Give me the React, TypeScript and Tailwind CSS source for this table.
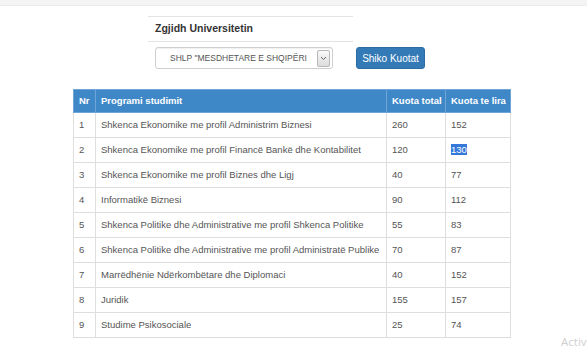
import React from 'react';

// ============ 数据 ============

interface ProgramRow {
    nr: number;
    name: string;
    total: number;
    free: number;
}

const ROWS: ProgramRow[] = [
    { nr: 1, name: 'Shkenca Ekonomike me profil Administrim Biznesi', total: 260, free: 152 },
    { nr: 2, name: 'Shkenca Ekonomike me profil Financë Bankë dhe Kontabilitet', total: 120, free: 130 },
    { nr: 3, name: 'Shkenca Ekonomike me profil Biznes dhe Ligj', total: 40, free: 77 },
    { nr: 4, name: 'Informatikë Biznesi', total: 90, free: 112 },
    { nr: 5, name: 'Shkenca Politike dhe Administrative me profil Shkenca Politike', total: 55, free: 83 },
    { nr: 6, name: 'Shkenca Politike dhe Administrative me profil Administratë Publike', total: 70, free: 87 },
    { nr: 7, name: 'Marrëdhënie Ndërkombëtare dhe Diplomaci', total: 40, free: 152 },
    { nr: 8, name: 'Juridik', total: 155, free: 157 },
    { nr: 9, name: 'Studime Psikosociale', total: 25, free: 74 },
];

const cell = 'border border-[#dedede] px-[5px] h-[25px] align-middle whitespace-nowrap';
const head = 'border border-[#6fa5d6] px-[5px] h-[23px] align-middle text-left font-bold text-white whitespace-nowrap';

export default function App() {
    return (
        <div className="relative w-[587px] h-[350px] overflow-hidden bg-white font-['Liberation_Sans',Arial,sans-serif] text-[#555]">
            {/* 顶部条 */}
            <div className="h-[6px] bg-[#f4f4f4] border-b border-[#ebebeb]" />

            {/* 标题 */}
            <div className="ml-[148px] mt-[10px] w-[205px] border-t border-[#e3e3e3] border-b">
                <div className="pl-[7px] h-[24px] flex items-center text-[10.5px] font-bold text-[#333]">
                    Zgjidh Universitetin
                </div>
            </div>

            {/* 选择 + 按钮 */}
            <div className="ml-[155px] mt-[5px] flex items-center gap-[23px]">
                <div className="w-[178px] h-[22px] border border-[#cfcfcf] rounded-[3px] bg-white flex items-center shadow-[inset_0_1px_1px_rgba(0,0,0,0.06)]">
                    <span className="flex-1 text-center text-[8.5px] text-[#555] whitespace-nowrap pl-[4px]">
                        SHLP "MESDHETARE E SHQIPËRI
                    </span>
                    <span className="mr-[2px] w-[13px] h-[17px] border border-[#b8b8b8] rounded-[2px] bg-gradient-to-b from-[#fafafa] to-[#dcdcdc] flex items-center justify-center">
                        <svg width="7" height="5" viewBox="0 0 7 5">
                            <path d="M1 1l2.5 2.5L6 1" stroke="#666" strokeWidth="1" fill="none" />
                        </svg>
                    </span>
                </div>
                <button className="w-[69px] h-[22px] rounded-[3px] bg-[#337ab7] border border-[#2e6da4] text-white text-[10px]">
                    Shiko Kuotat
                </button>
            </div>

            {/* 表格 */}
            <table className="ml-[73px] mt-[20px] w-[437px] table-fixed border-collapse text-[9.5px]">
                <colgroup>
                    <col className="w-[22px]" />
                    <col className="w-[291px]" />
                    <col className="w-[59px]" />
                    <col className="w-[65px]" />
                </colgroup>
                <thead>
                    <tr className="bg-[#3f88c8]">
                        <th className={head}>Nr</th>
                        <th className={head}>Programi studimit</th>
                        <th className={head}>Kuota total</th>
                        <th className={head}>Kuota te lira</th>
                    </tr>
                </thead>
                <tbody>
                    {ROWS.map(row => (
                        <tr key={row.nr}>
                            <td className={cell}>{row.nr}</td>
                            <td className={cell}>{row.name}</td>
                            <td className={cell}>{row.total}</td>
                            <td className={cell}>
                                {row.nr === 2 ? (
                                    <span className="bg-[#3479d9] text-white">{row.free}</span>
                                ) : (
                                    row.free
                                )}
                            </td>
                        </tr>
                    ))}
                </tbody>
            </table>

            {/* 水印 */}
            <div className="absolute left-[561px] top-[333px] text-[11.5px] text-[#cfcfcf] font-['Open_Sans',sans-serif] whitespace-nowrap">
                Activ
            </div>
        </div>
    );
}
